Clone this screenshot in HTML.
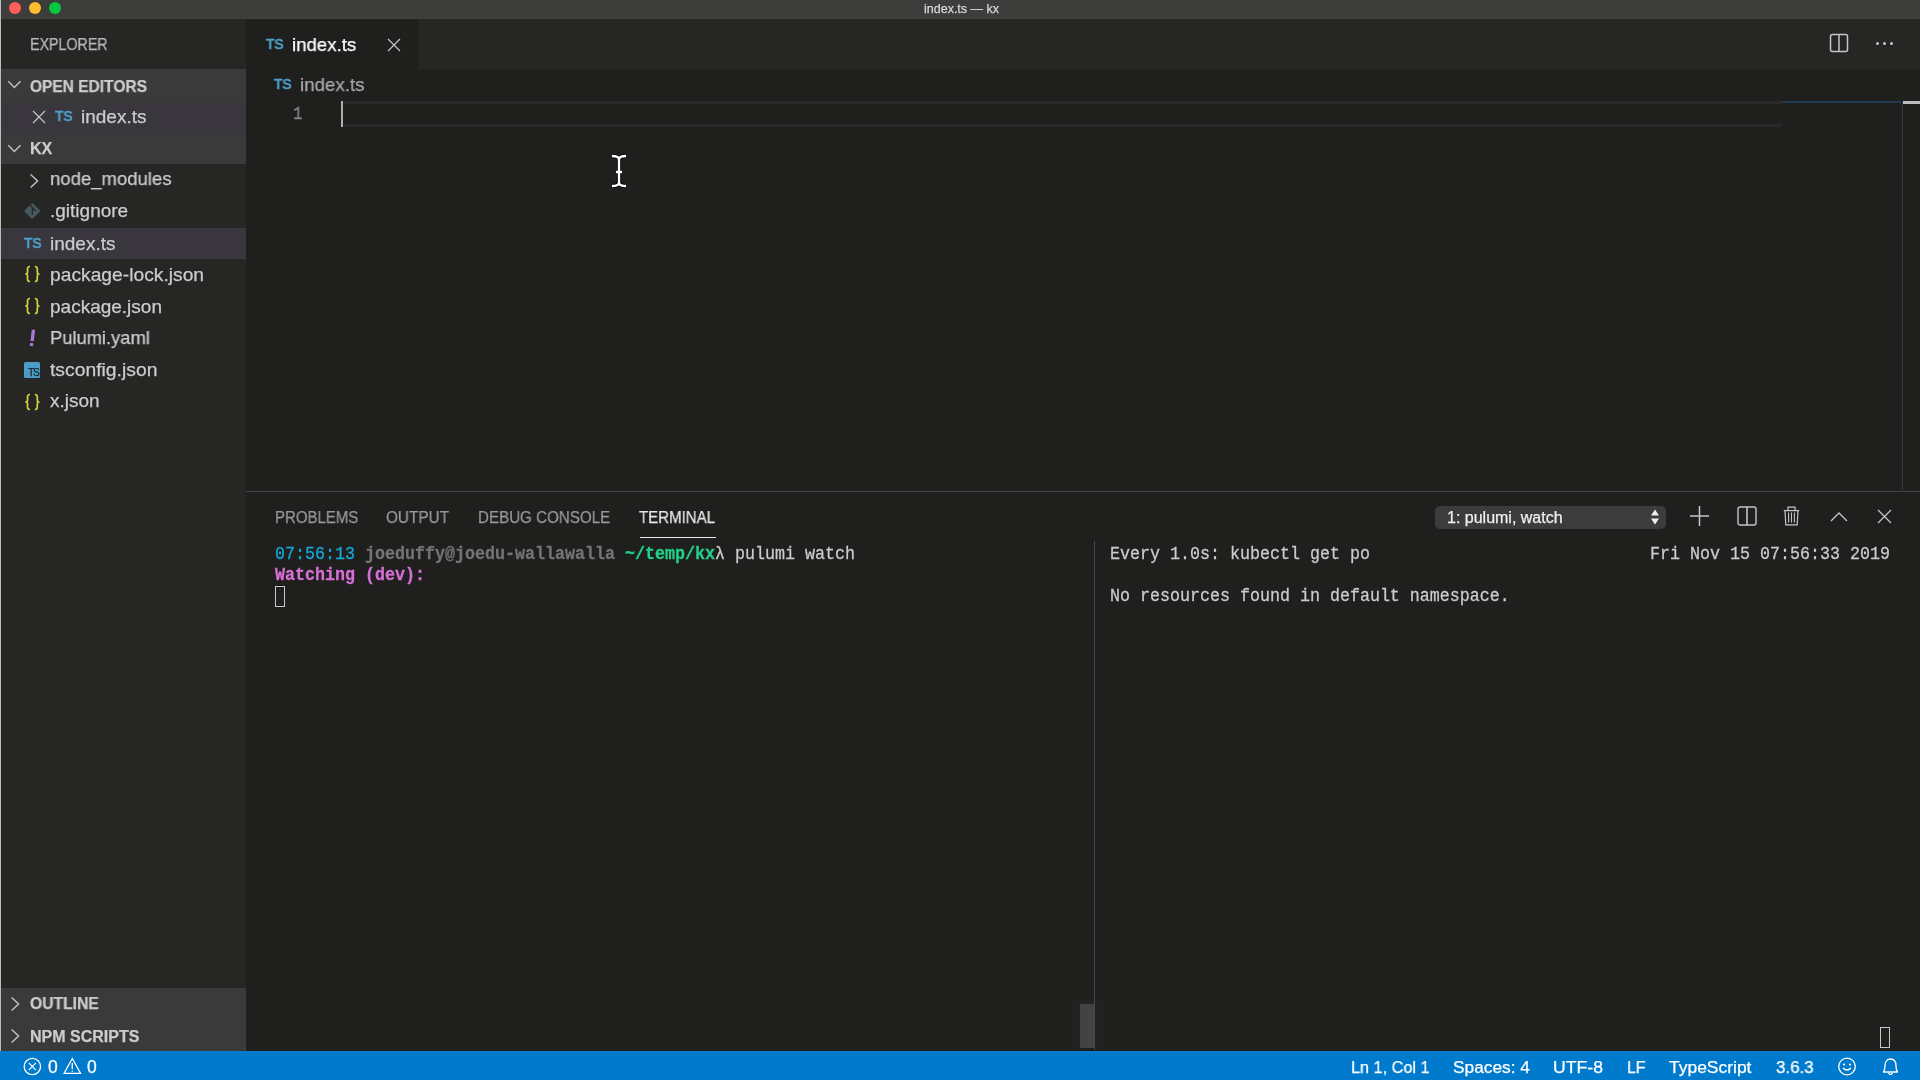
<!DOCTYPE html>
<html><head><meta charset="utf-8"><title>index.ts — kx</title>
<style>
*{margin:0;padding:0;box-sizing:border-box}
html,body{width:1920px;height:1080px;overflow:hidden;background:#1f1f1e;font-family:"Liberation Sans",sans-serif;color:#cccccc;position:relative}
.a{position:absolute}
.t{position:absolute;white-space:pre;line-height:1;will-change:transform;-webkit-text-stroke:0.25px currentColor}
svg.a{overflow:visible}
</style></head><body>
<div class="a" style="left:0px;top:0px;width:1920px;height:19px;background:#3d3d3c;"></div>
<div class="a" style="left:0px;top:18px;width:1920px;height:1px;background:#414140;"></div>
<div class="a" style="left:1px;top:19px;width:245px;height:1032px;background:#262625;"></div>
<div class="a" style="left:0px;top:0px;width:1px;height:1080px;background:#bcbcbc;"></div>
<div class="a" style="left:1px;top:69px;width:245px;height:32.6px;background:#3a3a3b;"></div>
<div class="a" style="left:1px;top:101.6px;width:245px;height:32.4px;background:#39363d;"></div>
<div class="a" style="left:1px;top:134px;width:245px;height:30px;background:#3a3a3b;"></div>
<div class="a" style="left:1px;top:228px;width:245px;height:31px;background:#39363d;"></div>
<div class="a" style="left:1px;top:988px;width:245px;height:31px;background:#3a3a3b;"></div>
<div class="a" style="left:1px;top:1019px;width:245px;height:32px;background:#3a3a3b;"></div>
<div class="a" style="left:246px;top:19px;width:1674px;height:50px;background:#262625;"></div>
<div class="a" style="left:246px;top:19px;width:172px;height:50px;background:#1f1f1e;"></div>
<div class="a" style="left:9px;top:2px;width:12px;height:12px;background:#fd5f57;border-radius:50%"></div>
<div class="a" style="left:29px;top:2px;width:12px;height:12px;background:#febc2e;border-radius:50%"></div>
<div class="a" style="left:49px;top:2px;width:12px;height:12px;background:#03c840;border-radius:50%"></div>
<div class="t" style="left:924.00px;top:3.00px;font-size:12.5px;color:#d8d8d8;">index.ts — kx</div>
<div class="t" style="left:30.30px;top:36.95px;font-size:16px;color:#bbbbbb;transform:scale(0.89,1.0);transform-origin:0 13.55px;">EXPLORER</div>
<svg class="a" style="left:7px;top:80px;" width="16" height="10" viewBox="0 0 16 10"><path d="M1.3 1.3 L7.4 7.6 L13.5 1.3" fill="none" stroke="#c5c5c5" stroke-width="1.4"/></svg>
<div class="t" style="left:30.00px;top:77.63px;font-size:16.5px;color:#cccccc;font-weight:bold;transform:scale(0.94,1.0);transform-origin:0 13.97px;">OPEN EDITORS</div>
<svg class="a" style="left:32px;top:110px;" width="14" height="14" viewBox="0 0 14 14"><path d="M1 1 L13 13 M13 1 L1 13" fill="none" stroke="#c5c5c5" stroke-width="1.2"/></svg>
<div class="t" style="left:55.20px;top:108.92px;font-size:14.5px;color:#4fa3cf;transform:scale(0.95,1.0);transform-origin:0 12.28px;-webkit-text-stroke:0.7px currentColor;">TS</div>
<div class="t" style="left:81.00px;top:106.91px;font-size:19px;color:#cccccc;">index.ts</div>
<svg class="a" style="left:7px;top:143.5px;" width="16" height="10" viewBox="0 0 16 10"><path d="M1.3 1.3 L7.4 7.6 L13.5 1.3" fill="none" stroke="#c5c5c5" stroke-width="1.4"/></svg>
<div class="t" style="left:30.00px;top:140.95px;font-size:16px;color:#cccccc;font-weight:bold;">KX</div>
<svg class="a" style="left:29px;top:173px;" width="10" height="16" viewBox="0 0 10 16"><path d="M1.6 1.4 L8.6 8 L1.6 14.6" fill="none" stroke="#c5c5c5" stroke-width="1.4"/></svg>
<div class="t" style="left:50.00px;top:169.21px;font-size:19px;color:#cccccc;transform:scale(0.975,1.0);transform-origin:0 16.09px;">node_modules</div>
<svg class="a" style="left:23px;top:202px;" width="18" height="18" viewBox="0 0 18 18"><path d="M9.2 2.2 L16 9 L9.2 15.8 L2.4 9 Z" fill="#47595f" stroke="#47595f" stroke-width="2" stroke-linejoin="round"/><path d="M7.3 2.6 L9.3 5.6 V13 M9.3 5.6 L12.6 9" fill="none" stroke="#1f2325" stroke-width="1.1"/></svg>
<div class="t" style="left:50.00px;top:201.41px;font-size:19px;color:#cccccc;">.gitignore</div>
<div class="t" style="left:23.70px;top:236.32px;font-size:14.5px;color:#4fa3cf;transform:scale(0.95,1.0);transform-origin:0 12.28px;-webkit-text-stroke:0.7px currentColor;">TS</div>
<div class="t" style="left:50.00px;top:233.51px;font-size:19px;color:#cccccc;">index.ts</div>
<svg class="a" style="left:22px;top:264px;" width="21" height="20" viewBox="0 0 21 20"><path d="M8 2.5 C6 2.5 5.5 3.5 5.5 5 V8.2 C5.5 9.3 4.6 10 3.3 10 C4.6 10 5.5 10.7 5.5 11.8 V15 C5.5 16.5 6 17.5 8 17.5 M12.8 2.5 C14.8 2.5 15.3 3.5 15.3 5 V8.2 C15.3 9.3 16.2 10 17.5 10 C16.2 10 15.3 10.7 15.3 11.8 V15 C15.3 16.5 14.8 17.5 12.8 17.5" fill="none" stroke="#d0d03e" stroke-width="1.7"/></svg>
<div class="t" style="left:50.00px;top:264.91px;font-size:19px;color:#cccccc;transform:scale(1.013,1.0);transform-origin:0 16.09px;">package-lock.json</div>
<svg class="a" style="left:22px;top:296px;" width="21" height="20" viewBox="0 0 21 20"><path d="M8 2.5 C6 2.5 5.5 3.5 5.5 5 V8.2 C5.5 9.3 4.6 10 3.3 10 C4.6 10 5.5 10.7 5.5 11.8 V15 C5.5 16.5 6 17.5 8 17.5 M12.8 2.5 C14.8 2.5 15.3 3.5 15.3 5 V8.2 C15.3 9.3 16.2 10 17.5 10 C16.2 10 15.3 10.7 15.3 11.8 V15 C15.3 16.5 14.8 17.5 12.8 17.5" fill="none" stroke="#d0d03e" stroke-width="1.7"/></svg>
<div class="t" style="left:50.00px;top:296.51px;font-size:19px;color:#cccccc;">package.json</div>
<svg class="a" style="left:26px;top:326px;" width="12" height="24" viewBox="0 0 12 24"><path d="M5.7 3.7 H9.1 L7.8 14.9 H4.6 Z" fill="#ad78d6"/><rect x="3.8" y="17" width="3.5" height="3.1" rx="1" fill="#ad78d6"/></svg>
<div class="t" style="left:50.00px;top:328.31px;font-size:19px;color:#cccccc;transform:scale(0.965,1.0);transform-origin:0 16.09px;">Pulumi.yaml</div>
<div class="a" style="left:24px;top:362px;width:16.3px;height:16px;background:#4b9dc8;border-radius:1.5px"></div>
<div class="t" style="left:27.80px;top:368.08px;font-size:10.3px;color:#1b2328;">T</div>
<div class="t" style="left:33.20px;top:368.08px;font-size:10.3px;color:#1b2328;">S</div>
<div class="t" style="left:50.00px;top:359.91px;font-size:19px;color:#cccccc;transform:scale(1.017,1.0);transform-origin:0 16.09px;">tsconfig.json</div>
<svg class="a" style="left:22px;top:391.5px;" width="21" height="20" viewBox="0 0 21 20"><path d="M8 2.5 C6 2.5 5.5 3.5 5.5 5 V8.2 C5.5 9.3 4.6 10 3.3 10 C4.6 10 5.5 10.7 5.5 11.8 V15 C5.5 16.5 6 17.5 8 17.5 M12.8 2.5 C14.8 2.5 15.3 3.5 15.3 5 V8.2 C15.3 9.3 16.2 10 17.5 10 C16.2 10 15.3 10.7 15.3 11.8 V15 C15.3 16.5 14.8 17.5 12.8 17.5" fill="none" stroke="#d0d03e" stroke-width="1.7"/></svg>
<div class="t" style="left:50.00px;top:391.41px;font-size:19px;color:#cccccc;">x.json</div>
<svg class="a" style="left:10px;top:996px;" width="10" height="16" viewBox="0 0 10 16"><path d="M1.6 1.4 L8.6 8 L1.6 14.6" fill="none" stroke="#c5c5c5" stroke-width="1.4"/></svg>
<div class="t" style="left:30.00px;top:996.45px;font-size:16px;color:#cccccc;font-weight:bold;transform:scale(0.98,1.0);transform-origin:0 13.55px;">OUTLINE</div>
<svg class="a" style="left:10px;top:1028px;" width="10" height="16" viewBox="0 0 10 16"><path d="M1.6 1.4 L8.6 8 L1.6 14.6" fill="none" stroke="#c5c5c5" stroke-width="1.4"/></svg>
<div class="t" style="left:30.00px;top:1028.75px;font-size:16px;color:#cccccc;font-weight:bold;">NPM SCRIPTS</div>
<div class="t" style="left:265.70px;top:37.22px;font-size:14.5px;color:#4fa3cf;transform:scale(0.95,1.0);transform-origin:0 12.28px;-webkit-text-stroke:0.7px currentColor;">TS</div>
<div class="t" style="left:291.50px;top:34.91px;font-size:19px;color:#ffffff;transform:scale(0.98,1.0);transform-origin:0 16.09px;">index.ts</div>
<svg class="a" style="left:387px;top:38px;" width="14" height="14" viewBox="0 0 14 14"><path d="M1 1 L13 13 M13 1 L1 13" fill="none" stroke="#c5c5c5" stroke-width="1.2"/></svg>
<svg class="a" style="left:1829px;top:33px;" width="21" height="21" viewBox="0 0 21 21"><rect x="1.5" y="1.5" width="17" height="17" rx="2" fill="none" stroke="#c5c5c5" stroke-width="1.5"/><path d="M10 1.5 V18.5" stroke="#c5c5c5" stroke-width="1.5"/></svg>
<div class="a" style="left:1875.5px;top:41.9px;width:3px;height:3px;background:#c5c5c5;border-radius:50%"></div>
<div class="a" style="left:1882.5px;top:41.9px;width:3px;height:3px;background:#c5c5c5;border-radius:50%"></div>
<div class="a" style="left:1889.5px;top:41.9px;width:3px;height:3px;background:#c5c5c5;border-radius:50%"></div>
<div class="t" style="left:274.10px;top:77.02px;font-size:14.5px;color:#4fa3cf;transform:scale(0.95,1.0);transform-origin:0 12.28px;-webkit-text-stroke:0.7px currentColor;">TS</div>
<div class="t" style="left:300.30px;top:74.91px;font-size:19px;color:#a9a9a9;transform:scale(0.985,1.0);transform-origin:0 16.09px;">index.ts</div>
<div class="t" style="left:293.20px;top:105.79px;font-size:17.5px;color:#858585;font-family:'Liberation Mono',monospace;transform:scale(0.9,1.0);transform-origin:0 13.41px;-webkit-text-stroke:0.5px currentColor;">1</div>
<div class="a" style="left:343px;top:101px;width:1439px;height:3px;background:#29292c;"></div>
<div class="a" style="left:343px;top:124px;width:1439px;height:3px;background:#29292c;"></div>
<div class="a" style="left:341px;top:101px;width:2px;height:26px;background:#aeafad;"></div>
<div class="a" style="left:1782px;top:101px;width:119px;height:2px;background:#1f3a52;"></div>
<div class="a" style="left:1902px;top:102px;width:1px;height:388px;background:#3a3a3a;"></div>
<div class="a" style="left:1903px;top:101px;width:17px;height:3px;background:#bdbdbd;"></div>
<svg class="a" style="left:606px;top:150px;" width="26" height="42" viewBox="0 0 26 42"><g fill="none" stroke-linecap="butt"><path d="M6 6 C10 6 12.5 6.5 13 9 C13.5 6.5 16 6 20 6 M13 9 V33 M6 36 C10 36 12.5 35.5 13 33 C13.5 35.5 16 36 20 36 M10 22 H16" stroke="#000" stroke-width="4.2"/><path d="M6 6 C10 6 12.5 6.5 13 9 C13.5 6.5 16 6 20 6 M13 9 V33 M6 36 C10 36 12.5 35.5 13 33 C13.5 35.5 16 36 20 36 M10 22 H16" stroke="#fff" stroke-width="2.4"/></g></svg>
<div class="a" style="left:246px;top:491px;width:1674px;height:1px;background:#454545;"></div>
<div class="t" style="left:274.50px;top:509.23px;font-size:16.5px;color:#9a9a9a;transform:scale(0.907,1.0);transform-origin:0 13.97px;">PROBLEMS</div>
<div class="t" style="left:386.30px;top:509.23px;font-size:16.5px;color:#9a9a9a;transform:scale(0.93,1.0);transform-origin:0 13.97px;">OUTPUT</div>
<div class="t" style="left:478.30px;top:509.23px;font-size:16.5px;color:#9a9a9a;transform:scale(0.918,1.0);transform-origin:0 13.97px;">DEBUG CONSOLE</div>
<div class="t" style="left:639.30px;top:509.23px;font-size:16.5px;color:#e7e7e7;transform:scale(0.912,1.0);transform-origin:0 13.97px;">TERMINAL</div>
<div class="a" style="left:640px;top:536.5px;width:76px;height:1.5px;background:#e7e7e7;"></div>
<div class="a" style="left:1435px;top:506px;width:231px;height:23px;background:#3c3c3c;border-radius:5px"></div>
<div class="t" style="left:1446.50px;top:510.45px;font-size:16px;color:#f0f0f0;">1: pulumi, watch</div>
<svg class="a" style="left:1649px;top:508px;" width="12" height="18" viewBox="0 0 12 18"><path d="M6 1.5 L10 7.5 H2 Z M6 16.5 L10 10.5 H2 Z" fill="#f0f0f0"/></svg>
<svg class="a" style="left:1689px;top:505px;" width="21" height="22" viewBox="0 0 21 22"><path d="M10.5 1 V21 M1 11 H20" stroke="#c5c5c5" stroke-width="1.5"/></svg>
<svg class="a" style="left:1737px;top:506px;" width="20" height="20" viewBox="0 0 20 20"><rect x="1" y="1" width="18" height="18" rx="2" fill="none" stroke="#c5c5c5" stroke-width="1.4"/><path d="M10 1 V19" stroke="#c5c5c5" stroke-width="1.6"/></svg>
<svg class="a" style="left:1783px;top:506px;" width="17" height="20" viewBox="0 0 17 20"><path d="M0.8 4.6 H16.2" stroke="#c5c5c5" stroke-width="1.3"/><path d="M5 4.3 V1.2 H12 V4.3" fill="none" stroke="#c5c5c5" stroke-width="1.2"/><path d="M2 4.6 L2.8 18.8 H14.2 L15 4.6" fill="none" stroke="#c5c5c5" stroke-width="1.2"/><path d="M5.6 6.5 V16.5 M8.5 6.5 V16.5 M11.4 6.5 V16.5" stroke="#c5c5c5" stroke-width="1.1"/></svg>
<svg class="a" style="left:1830px;top:511px;" width="18" height="11" viewBox="0 0 18 11"><path d="M1 10 L9 2 L17 10" fill="none" stroke="#c5c5c5" stroke-width="1.3"/></svg>
<svg class="a" style="left:1877px;top:509px;" width="15" height="15" viewBox="0 0 15 15"><path d="M1 1 L14 14 M14 1 L1 14" fill="none" stroke="#c5c5c5" stroke-width="1.3"/></svg>
<div class="t" style="left:275.00px;top:546.63px;font-size:16.67px;color:#17a9d8;font-family:'Liberation Mono',monospace;transform:scale(1.0,1.1);transform-origin:0 12.77px;">07:56:13 </div>
<div class="t" style="left:365.00px;top:546.63px;font-size:16.67px;color:#747474;font-weight:bold;font-family:'Liberation Mono',monospace;transform:scale(1.0,1.1);transform-origin:0 12.77px;">joeduffy@joedu-wallawalla </div>
<div class="t" style="left:625.00px;top:546.63px;font-size:16.67px;color:#23d18b;font-weight:bold;font-family:'Liberation Mono',monospace;transform:scale(1.0,1.1);transform-origin:0 12.77px;">~/temp/kx</div>
<div class="t" style="left:715.00px;top:546.63px;font-size:16.67px;color:#cccccc;font-family:'Liberation Mono',monospace;transform:scale(1.0,1.1);transform-origin:0 12.77px;">λ pulumi watch</div>
<div class="t" style="left:275.00px;top:567.63px;font-size:16.67px;color:#d670d6;font-weight:bold;font-family:'Liberation Mono',monospace;transform:scale(1.0,1.1);transform-origin:0 12.77px;">Watching (dev):</div>
<div class="a" style="left:275px;top:586px;width:10px;height:21px;background:transparent;border:1px solid #c8c8c8"></div>
<div class="a" style="left:1072px;top:1000px;width:32px;height:48px;background:#222224;"></div>
<div class="a" style="left:1080px;top:1004px;width:14px;height:44px;background:#434343;"></div>
<div class="a" style="left:1094px;top:541px;width:1px;height:509px;background:#474747;"></div>
<div class="t" style="left:1110.00px;top:546.63px;font-size:16.67px;color:#cccccc;font-family:'Liberation Mono',monospace;transform:scale(1.0,1.1);transform-origin:0 12.77px;">Every 1.0s: kubectl get po</div>
<div class="t" style="left:1650.00px;top:546.63px;font-size:16.67px;color:#cccccc;font-family:'Liberation Mono',monospace;transform:scale(1.0,1.1);transform-origin:0 12.77px;">Fri Nov 15 07:56:33 2019</div>
<div class="t" style="left:1110.00px;top:588.63px;font-size:16.67px;color:#cccccc;font-family:'Liberation Mono',monospace;transform:scale(1.0,1.1);transform-origin:0 12.77px;">No resources found in default namespace.</div>
<div class="a" style="left:1880px;top:1027px;width:10px;height:21px;background:transparent;border:1px solid #c8c8c8"></div>
<div class="a" style="left:0px;top:1051px;width:1920px;height:29px;background:#007acc;"></div>
<svg class="a" style="left:22px;top:1056px;" width="21" height="21" viewBox="0 0 21 21"><circle cx="10.35" cy="10.5" r="8.2" fill="none" stroke="#ffffff" stroke-width="1.3"/><path d="M6.8 6.8 L13.9 14.2 M13.9 6.8 L6.8 14.2" stroke="#ffffff" stroke-width="1.2"/></svg>
<div class="t" style="left:47.50px;top:1059.38px;font-size:17.5px;color:#ffffff;">0</div>
<svg class="a" style="left:62px;top:1056px;" width="21" height="20" viewBox="0 0 21 20"><path d="M10.3 2.5 L18.5 17.3 H2.1 Z" fill="none" stroke="#ffffff" stroke-width="1.3" stroke-linejoin="miter"/><path d="M10.3 7 V13" stroke="#ffffff" stroke-width="1.4"/><circle cx="10.3" cy="15" r="0.8" fill="#ffffff"/></svg>
<div class="t" style="left:87.00px;top:1059.38px;font-size:17.5px;color:#ffffff;">0</div>
<div class="t" style="left:1350.50px;top:1059.35px;font-size:17.3px;color:#ffffff;transform:scale(0.94,1.0);transform-origin:0 14.65px;">Ln 1, Col 1</div>
<div class="t" style="left:1453.00px;top:1059.35px;font-size:17.3px;color:#ffffff;">Spaces: 4</div>
<div class="t" style="left:1552.50px;top:1059.35px;font-size:17.3px;color:#ffffff;transform:scale(1.02,1.0);transform-origin:0 14.65px;">UTF-8</div>
<div class="t" style="left:1626.50px;top:1059.35px;font-size:17.3px;color:#ffffff;transform:scale(0.92,1.0);transform-origin:0 14.65px;">LF</div>
<div class="t" style="left:1669.00px;top:1059.35px;font-size:17.3px;color:#ffffff;transform:scale(1.01,1.0);transform-origin:0 14.65px;">TypeScript</div>
<div class="t" style="left:1776.00px;top:1059.35px;font-size:17.3px;color:#ffffff;transform:scale(0.98,1.0);transform-origin:0 14.65px;">3.6.3</div>
<svg class="a" style="left:1836px;top:1056px;" width="22" height="21" viewBox="0 0 22 21"><circle cx="11" cy="10.5" r="8.3" fill="none" stroke="#ffffff" stroke-width="1.3"/><circle cx="8" cy="8.5" r="1.1" fill="#ffffff"/><circle cx="14" cy="8.5" r="1.1" fill="#ffffff"/><path d="M7 12 Q11 16 15 12" fill="none" stroke="#ffffff" stroke-width="1.3"/></svg>
<svg class="a" style="left:1881px;top:1056px;" width="19" height="21" viewBox="0 0 19 21"><path d="M2.5 16 C3.5 14.5 4 13 4 10 C4 5.5 6.2 3 9.5 3 C12.8 3 15 5.5 15 10 C15 13 15.5 14.5 16.5 16 Z" fill="none" stroke="#ffffff" stroke-width="1.3" stroke-linejoin="round"/><path d="M7.5 17.2 Q9.5 20 11.5 17.2" fill="none" stroke="#ffffff" stroke-width="1.2"/></svg>
</body></html>
